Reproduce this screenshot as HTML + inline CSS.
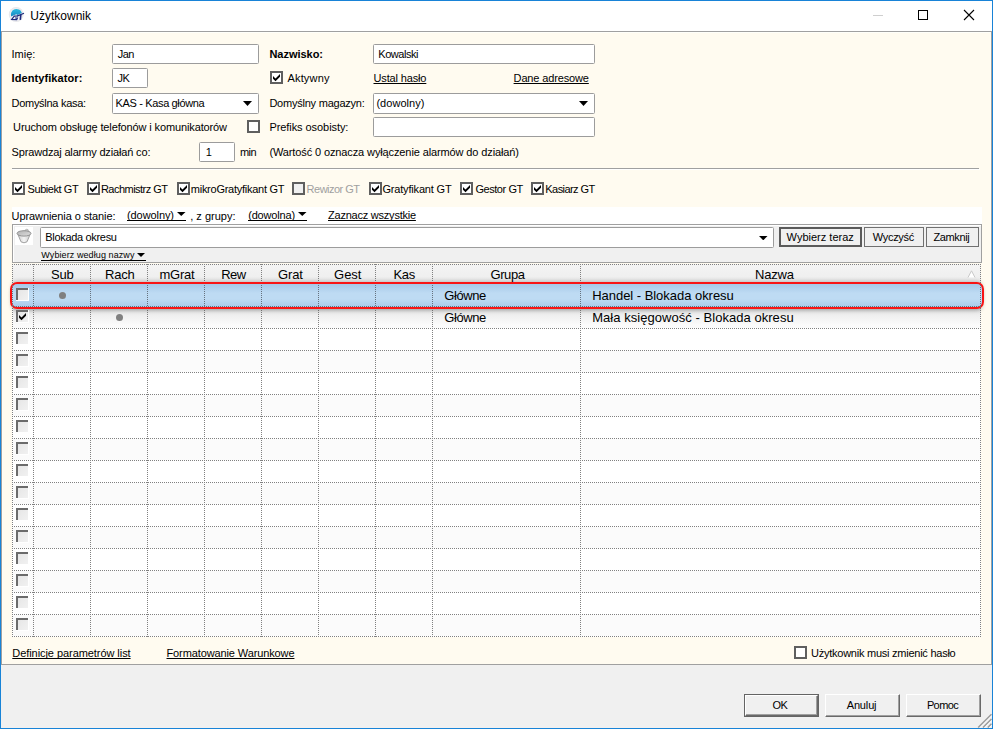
<!DOCTYPE html>
<html lang="pl"><head><meta charset="utf-8"><title>Użytkownik</title>
<style>
html,body{margin:0;padding:0}
body{width:993px;height:729px;position:relative;overflow:hidden;background:#f0f0f0;font-family:"Liberation Sans", sans-serif;}
div,.a,.t{position:absolute}
.t{white-space:nowrap;display:block;text-decoration-skip-ink:none}
</style></head>
<body>
<div style="left:0px;top:0px;width:993px;height:729px;background:#1883d7"></div>
<div style="left:1px;top:1px;width:991px;height:30px;background:#fff"></div>
<div style="left:1px;top:31px;width:991px;height:697px;background:#f0f0f0"></div>
<div style="left:1px;top:31px;width:991px;height:634px;background:#fffbf0;border:1px solid #a0a0a0;box-sizing:border-box"></div>
<div style="left:990px;top:32px;width:1px;height:632px;background:#fffff6"></div>
<div style="left:2px;top:32px;width:1px;height:632px;background:#fffdf6"></div>
<div style="left:2px;top:32px;width:988px;height:1px;background:#fffffa"></div>
<svg class="a" style="left:8px;top:6px" width="18" height="18" viewBox="0 0 18 18">
<defs><linearGradient id="ig" x1="0" y1="0" x2="0" y2="1"><stop offset="0" stop-color="#2dbbe0"/><stop offset="1" stop-color="#1787c2"/></linearGradient>
<radialGradient id="ic"><stop offset="0.7" stop-color="#f4f4f6"/><stop offset="1" stop-color="#dedee4" stop-opacity="0.8"/></radialGradient></defs>
<circle cx="8.2" cy="8.5" r="7.4" fill="url(#ic)"/>
<path d="M3.1 10.6 A5.5 5.5 0 0 1 13.9 6.9 L9.6 8.9 L8.2 8.3 Z" fill="url(#ig)"/>
<path d="M9.6 10 L6.3 10.2 L3.7 13.4 L8.7 13.6 L9.4 12 L7 12" stroke="#1c2a7c" stroke-width="1.2" fill="none"/>
<path d="M9 10.1 L16 7.3" stroke="#1c2a7c" stroke-width="1.2" fill="none"/>
<path d="M12.8 8.8 L12.3 13.9" stroke="#1c2a7c" stroke-width="1.6" fill="none"/>
</svg>
<div style="left:873px;top:15px;width:10px;height:1px;background:#cfcfcf"></div>
<div style="left:918px;top:10px;width:10px;height:10px;border:1px solid #000;box-sizing:border-box"></div>
<svg class="a" style="left:963px;top:9px" width="12" height="12" viewBox="0 0 12 12"><path d="M1 1 L11 11 M11 1 L1 11" stroke="#000" stroke-width="1.1" fill="none"/></svg>
<div style="left:112px;top:44px;width:147px;height:20px;background:#fff;border:1px solid #9c9c9c;border-radius:1.5px;box-sizing:border-box"></div>
<div style="left:112px;top:68px;width:36px;height:20px;background:#fff;border:1px solid #9c9c9c;border-radius:1.5px;box-sizing:border-box"></div>
<div style="left:112px;top:93px;width:147px;height:21px;background:#fff;border:1px solid #9c9c9c;border-radius:1.5px;box-sizing:border-box"></div>
<svg class="a" style="left:243px;top:101px" width="9" height="5" viewBox="0 0 9 5"><path d="M0 0 H9 L4.5 5 Z" fill="#000"/></svg>
<div style="left:247px;top:120px;width:13px;height:13px;background:#fff;border:2px solid #5f5f5f;box-sizing:border-box"></div>
<div style="left:199px;top:142px;width:36px;height:20px;background:#fff;border:1px solid #9c9c9c;border-radius:1.5px;box-sizing:border-box"></div>
<div style="left:373px;top:44px;width:222px;height:20px;background:#fff;border:1px solid #9c9c9c;border-radius:1.5px;box-sizing:border-box"></div>
<div style="left:270px;top:71px;width:13px;height:13px;background:#fff;border:2px solid #5f5f5f;box-sizing:border-box"><svg width="9" height="9" viewBox="0 0 9 9" style="position:absolute;left:0;top:0"><path d="M1 3 L1 5.8 L3.5 8.2 L8 3.8 L8 1 L3.5 5.4 Z" fill="#000"/></svg></div>
<div style="left:373px;top:93px;width:222px;height:21px;background:#fff;border:1px solid #9c9c9c;border-radius:1.5px;box-sizing:border-box"></div>
<svg class="a" style="left:579px;top:101px" width="9" height="5" viewBox="0 0 9 5"><path d="M0 0 H9 L4.5 5 Z" fill="#000"/></svg>
<div style="left:373px;top:117px;width:222px;height:20px;background:#fff;border:1px solid #9c9c9c;border-radius:1.5px;box-sizing:border-box"></div>
<div style="left:12px;top:168px;width:967px;height:1px;background:#a0a0a0"></div>
<div style="left:12px;top:169px;width:968px;height:1px;background:#fff"></div>
<div style="left:12px;top:182px;width:13px;height:13px;background:#fff;border:2px solid #5f5f5f;box-sizing:border-box"><svg width="9" height="9" viewBox="0 0 9 9" style="position:absolute;left:0;top:0"><path d="M1 3 L1 5.8 L3.5 8.2 L8 3.8 L8 1 L3.5 5.4 Z" fill="#000"/></svg></div>
<div style="left:87px;top:182px;width:13px;height:13px;background:#fff;border:2px solid #5f5f5f;box-sizing:border-box"><svg width="9" height="9" viewBox="0 0 9 9" style="position:absolute;left:0;top:0"><path d="M1 3 L1 5.8 L3.5 8.2 L8 3.8 L8 1 L3.5 5.4 Z" fill="#000"/></svg></div>
<div style="left:177px;top:182px;width:13px;height:13px;background:#fff;border:2px solid #5f5f5f;box-sizing:border-box"><svg width="9" height="9" viewBox="0 0 9 9" style="position:absolute;left:0;top:0"><path d="M1 3 L1 5.8 L3.5 8.2 L8 3.8 L8 1 L3.5 5.4 Z" fill="#000"/></svg></div>
<div style="left:292px;top:182px;width:13px;height:13px;background:#f0f0f0;border:2px solid #5f5f5f;box-sizing:border-box"></div>
<div style="left:369px;top:182px;width:13px;height:13px;background:#fff;border:2px solid #5f5f5f;box-sizing:border-box"><svg width="9" height="9" viewBox="0 0 9 9" style="position:absolute;left:0;top:0"><path d="M1 3 L1 5.8 L3.5 8.2 L8 3.8 L8 1 L3.5 5.4 Z" fill="#000"/></svg></div>
<div style="left:460px;top:182px;width:13px;height:13px;background:#fff;border:2px solid #5f5f5f;box-sizing:border-box"><svg width="9" height="9" viewBox="0 0 9 9" style="position:absolute;left:0;top:0"><path d="M1 3 L1 5.8 L3.5 8.2 L8 3.8 L8 1 L3.5 5.4 Z" fill="#000"/></svg></div>
<div style="left:531px;top:182px;width:13px;height:13px;background:#fff;border:2px solid #5f5f5f;box-sizing:border-box"><svg width="9" height="9" viewBox="0 0 9 9" style="position:absolute;left:0;top:0"><path d="M1 3 L1 5.8 L3.5 8.2 L8 3.8 L8 1 L3.5 5.4 Z" fill="#000"/></svg></div>
<div style="left:12px;top:207px;width:970px;height:18px;background:#fff"></div>
<svg class="a" style="left:177px;top:212px" width="8.5" height="4" viewBox="0 0 8.5 4"><path d="M0 0 H8.5 L4.25 4 Z" fill="#000"/></svg>
<div style="left:127px;top:220px;width:59px;height:1px;background:#000"></div>
<svg class="a" style="left:298px;top:212px" width="8.5" height="4" viewBox="0 0 8.5 4"><path d="M0 0 H8.5 L4.25 4 Z" fill="#000"/></svg>
<div style="left:248px;top:220px;width:59px;height:1px;background:#000"></div>
<div style="left:12px;top:224px;width:970px;height:39px;background:#f0f0f0;border:1px solid #a0a0a0;box-sizing:border-box"></div>
<div style="left:13px;top:225px;width:968px;height:1px;background:#fff"></div>
<div style="left:13px;top:225px;width:1px;height:37px;background:#fff"></div>
<div style="left:15px;top:227px;width:18px;height:18px;background:#fff"></div>
<svg class="a" style="left:15px;top:227px" width="18" height="18" viewBox="0 0 18 18">
<defs><linearGradient id="fg" x1="0" y1="0" x2="1" y2="0"><stop offset="0" stop-color="#cfcfcf"/><stop offset="0.5" stop-color="#f4f4f4"/><stop offset="1" stop-color="#cdcdcd"/></linearGradient>
<linearGradient id="fe" x1="0" y1="0" x2="1" y2="1"><stop offset="0" stop-color="#b2b2b2"/><stop offset="1" stop-color="#dedede"/></linearGradient></defs>
<path d="M3 7.6 L6 14.8 Q9 16.8 12 14.8 L15 7.6 Z" fill="url(#fg)" stroke="#a2a2a2" stroke-width="1"/>
<circle cx="11.8" cy="3.9" r="1.7" fill="#cacaca" stroke="#a8a8a8" stroke-width="0.7"/>
<ellipse cx="9" cy="6.4" rx="7" ry="2.7" fill="url(#fe)" stroke="#939393" stroke-width="1"/>
</svg>
<div style="left:40px;top:227px;width:734px;height:21px;background:#fff;border:1px solid #9c9c9c;border-radius:1.5px;box-sizing:border-box"></div>
<svg class="a" style="left:759px;top:236px" width="8.5" height="4.3" viewBox="0 0 8.5 4.3"><path d="M0 0 H8.5 L4.25 4.3 Z" fill="#000"/></svg>
<svg class="a" style="left:137px;top:253px" width="8" height="4" viewBox="0 0 8 4"><path d="M0 0 H8 L4.0 4 Z" fill="#000"/></svg>
<div style="left:41px;top:260px;width:105px;height:1px;background:#000"></div>
<div style="left:779px;top:227px;width:83px;height:20px;background:#f0f0f0;border:2px solid #5a5a5a;box-sizing:border-box"></div>
<div style="left:864px;top:227px;width:60px;height:20px;background:#f0f0f0;border:1px solid #707070;box-sizing:border-box"></div>
<div style="left:926px;top:227px;width:53px;height:20px;background:#f0f0f0;border:1px solid #707070;box-sizing:border-box"></div>
<div style="left:12px;top:264px;width:969px;height:373px;background:#fff"></div>
<div style="left:12px;top:264px;width:969px;height:21px;background:linear-gradient(#f4f4f4,#ececec)"></div>
<div style="left:13px;top:307px;width:968px;height:21px;background:linear-gradient(#d6d6d6,#ececec 30%,#fbfbfb 85%)"></div>
<div style="left:13px;top:351px;width:968px;height:21px;background:#fbfbfb"></div>
<div style="left:13px;top:395px;width:968px;height:21px;background:#fbfbfb"></div>
<div style="left:13px;top:439px;width:968px;height:21px;background:#fbfbfb"></div>
<div style="left:13px;top:483px;width:968px;height:21px;background:#fbfbfb"></div>
<div style="left:13px;top:527px;width:968px;height:21px;background:#fbfbfb"></div>
<div style="left:13px;top:571px;width:968px;height:21px;background:#fbfbfb"></div>
<div style="left:13px;top:615px;width:968px;height:21px;background:#fbfbfb"></div>
<svg class="a" style="left:0;top:0" width="993" height="729" viewBox="0 0 993 729"><g stroke="#808080" stroke-width="1" stroke-dasharray="1 1" shape-rendering="crispEdges"><line x1="12.5" y1="264" x2="12.5" y2="637"/><line x1="33.5" y1="264" x2="33.5" y2="637"/><line x1="90.5" y1="264" x2="90.5" y2="637"/><line x1="147.5" y1="264" x2="147.5" y2="637"/><line x1="204.5" y1="264" x2="204.5" y2="637"/><line x1="261.5" y1="264" x2="261.5" y2="637"/><line x1="318.5" y1="264" x2="318.5" y2="637"/><line x1="375.5" y1="264" x2="375.5" y2="637"/><line x1="432.5" y1="264" x2="432.5" y2="637"/><line x1="580.5" y1="264" x2="580.5" y2="637"/><line x1="980.5" y1="264" x2="980.5" y2="637"/><line x1="12" y1="264.5" x2="981" y2="264.5"/><line x1="12" y1="284.5" x2="981" y2="284.5"/><line x1="12" y1="306.5" x2="981" y2="306.5"/><line x1="12" y1="328.5" x2="981" y2="328.5"/><line x1="12" y1="350.5" x2="981" y2="350.5"/><line x1="12" y1="372.5" x2="981" y2="372.5"/><line x1="12" y1="394.5" x2="981" y2="394.5"/><line x1="12" y1="416.5" x2="981" y2="416.5"/><line x1="12" y1="438.5" x2="981" y2="438.5"/><line x1="12" y1="460.5" x2="981" y2="460.5"/><line x1="12" y1="482.5" x2="981" y2="482.5"/><line x1="12" y1="504.5" x2="981" y2="504.5"/><line x1="12" y1="526.5" x2="981" y2="526.5"/><line x1="12" y1="548.5" x2="981" y2="548.5"/><line x1="12" y1="570.5" x2="981" y2="570.5"/><line x1="12" y1="592.5" x2="981" y2="592.5"/><line x1="12" y1="614.5" x2="981" y2="614.5"/><line x1="12" y1="636.5" x2="981" y2="636.5"/></g></svg>
<svg class="a" style="left:967px;top:270px" width="9" height="8" viewBox="0 0 9 8"><path d="M1 7.5 L4.5 0.8 L8 7.5" fill="#fff" stroke="#c8c8c8" stroke-width="1"/></svg>
<div style="left:9.5px;top:282.2px;width:974px;height:27.3px;border:2.4px solid #f81414;border-radius:7px;box-sizing:border-box;background:linear-gradient(#a6c8e7,#bedbf3 40%,#bedbf3 65%,#a8caea);box-shadow:0 3px 4px -2px rgba(0,0,0,0.3),0 -3px 4px -2px rgba(0,0,0,0.22)"></div>
<svg class="a" style="left:0;top:0" width="993" height="729" viewBox="0 0 993 729"><g stroke="#66727e" stroke-width="1" stroke-dasharray="1 1" shape-rendering="crispEdges"><line x1="33.5" y1="285" x2="33.5" y2="307"/><line x1="90.5" y1="285" x2="90.5" y2="307"/><line x1="147.5" y1="285" x2="147.5" y2="307"/><line x1="204.5" y1="285" x2="204.5" y2="307"/><line x1="261.5" y1="285" x2="261.5" y2="307"/><line x1="318.5" y1="285" x2="318.5" y2="307"/><line x1="375.5" y1="285" x2="375.5" y2="307"/><line x1="432.5" y1="285" x2="432.5" y2="307"/><line x1="580.5" y1="285" x2="580.5" y2="307"/><line x1="12" y1="306.5" x2="981" y2="306.5"/><line x1="12.5" y1="285" x2="12.5" y2="307"/><line x1="980.5" y1="285" x2="980.5" y2="307"/></g></svg>
<div style="left:16px;top:288px;width:13px;height:13px;background:#fff"><div style="left:0;top:0;width:12px;height:12px;background:#6b6b6b"></div><div style="left:2px;top:2px;width:10px;height:10px;background:linear-gradient(135deg,#e6e6e6,#f1f1f1)"></div></div>
<div style="left:16px;top:310px;width:13px;height:13px;background:#fff"><div style="left:0;top:0;width:12px;height:12px;background:#6b6b6b"></div><div style="left:2px;top:2px;width:10px;height:10px;background:linear-gradient(135deg,#e6e6e6,#f1f1f1)"></div><svg width="9" height="9" viewBox="0 0 9 9" style="position:absolute;left:2px;top:2px"><path d="M1 3 L1 5.8 L3.5 8.2 L8 3.8 L8 1 L3.5 5.4 Z" fill="#000"/></svg></div>
<div style="left:16px;top:332px;width:13px;height:13px;background:#fff"><div style="left:0;top:0;width:12px;height:12px;background:#6b6b6b"></div><div style="left:2px;top:2px;width:10px;height:10px;background:linear-gradient(135deg,#e6e6e6,#f1f1f1)"></div></div>
<div style="left:16px;top:354px;width:13px;height:13px;background:#fff"><div style="left:0;top:0;width:12px;height:12px;background:#6b6b6b"></div><div style="left:2px;top:2px;width:10px;height:10px;background:linear-gradient(135deg,#e6e6e6,#f1f1f1)"></div></div>
<div style="left:16px;top:376px;width:13px;height:13px;background:#fff"><div style="left:0;top:0;width:12px;height:12px;background:#6b6b6b"></div><div style="left:2px;top:2px;width:10px;height:10px;background:linear-gradient(135deg,#e6e6e6,#f1f1f1)"></div></div>
<div style="left:16px;top:398px;width:13px;height:13px;background:#fff"><div style="left:0;top:0;width:12px;height:12px;background:#6b6b6b"></div><div style="left:2px;top:2px;width:10px;height:10px;background:linear-gradient(135deg,#e6e6e6,#f1f1f1)"></div></div>
<div style="left:16px;top:420px;width:13px;height:13px;background:#fff"><div style="left:0;top:0;width:12px;height:12px;background:#6b6b6b"></div><div style="left:2px;top:2px;width:10px;height:10px;background:linear-gradient(135deg,#e6e6e6,#f1f1f1)"></div></div>
<div style="left:16px;top:442px;width:13px;height:13px;background:#fff"><div style="left:0;top:0;width:12px;height:12px;background:#6b6b6b"></div><div style="left:2px;top:2px;width:10px;height:10px;background:linear-gradient(135deg,#e6e6e6,#f1f1f1)"></div></div>
<div style="left:16px;top:464px;width:13px;height:13px;background:#fff"><div style="left:0;top:0;width:12px;height:12px;background:#6b6b6b"></div><div style="left:2px;top:2px;width:10px;height:10px;background:linear-gradient(135deg,#e6e6e6,#f1f1f1)"></div></div>
<div style="left:16px;top:486px;width:13px;height:13px;background:#fff"><div style="left:0;top:0;width:12px;height:12px;background:#6b6b6b"></div><div style="left:2px;top:2px;width:10px;height:10px;background:linear-gradient(135deg,#e6e6e6,#f1f1f1)"></div></div>
<div style="left:16px;top:508px;width:13px;height:13px;background:#fff"><div style="left:0;top:0;width:12px;height:12px;background:#6b6b6b"></div><div style="left:2px;top:2px;width:10px;height:10px;background:linear-gradient(135deg,#e6e6e6,#f1f1f1)"></div></div>
<div style="left:16px;top:530px;width:13px;height:13px;background:#fff"><div style="left:0;top:0;width:12px;height:12px;background:#6b6b6b"></div><div style="left:2px;top:2px;width:10px;height:10px;background:linear-gradient(135deg,#e6e6e6,#f1f1f1)"></div></div>
<div style="left:16px;top:552px;width:13px;height:13px;background:#fff"><div style="left:0;top:0;width:12px;height:12px;background:#6b6b6b"></div><div style="left:2px;top:2px;width:10px;height:10px;background:linear-gradient(135deg,#e6e6e6,#f1f1f1)"></div></div>
<div style="left:16px;top:574px;width:13px;height:13px;background:#fff"><div style="left:0;top:0;width:12px;height:12px;background:#6b6b6b"></div><div style="left:2px;top:2px;width:10px;height:10px;background:linear-gradient(135deg,#e6e6e6,#f1f1f1)"></div></div>
<div style="left:16px;top:596px;width:13px;height:13px;background:#fff"><div style="left:0;top:0;width:12px;height:12px;background:#6b6b6b"></div><div style="left:2px;top:2px;width:10px;height:10px;background:linear-gradient(135deg,#e6e6e6,#f1f1f1)"></div></div>
<div style="left:16px;top:618px;width:13px;height:13px;background:#fff"><div style="left:0;top:0;width:12px;height:12px;background:#6b6b6b"></div><div style="left:2px;top:2px;width:10px;height:10px;background:linear-gradient(135deg,#e6e6e6,#f1f1f1)"></div></div>
<div style="left:59px;top:292px;width:7px;height:7px;background:#808080;border-radius:50%"></div>
<div style="left:116px;top:314px;width:7px;height:7px;background:#808080;border-radius:50%"></div>
<div style="left:794px;top:646px;width:13px;height:13px;background:#fff;border:2px solid #5f5f5f;box-sizing:border-box"></div>
<div style="left:744px;top:694px;width:75px;height:23px;background:#f0f0f0;border:1px solid #646464;box-sizing:border-box"></div>
<div style="left:745px;top:695px;width:73px;height:21px;box-sizing:border-box;border-top:1px solid #fff;border-left:1px solid #fff;border-right:1px solid #696969;border-bottom:1px solid #696969"></div>
<div style="left:746px;top:696px;width:71px;height:19px;box-sizing:border-box;border-right:1px solid #a0a0a0;border-bottom:1px solid #a0a0a0"></div>
<div style="left:825px;top:694px;width:75px;height:23px;background:#f0f0f0;box-sizing:border-box;border-top:1px solid #fff;border-left:1px solid #fff;border-right:1px solid #696969;border-bottom:1px solid #696969"></div>
<div style="left:826px;top:695px;width:73px;height:21px;box-sizing:border-box;border-right:1px solid #a0a0a0;border-bottom:1px solid #a0a0a0"></div>
<div style="left:906px;top:694px;width:75px;height:23px;background:#f0f0f0;box-sizing:border-box;border-top:1px solid #fff;border-left:1px solid #fff;border-right:1px solid #696969;border-bottom:1px solid #696969"></div>
<div style="left:907px;top:695px;width:73px;height:21px;box-sizing:border-box;border-right:1px solid #a0a0a0;border-bottom:1px solid #a0a0a0"></div>
<svg class="a" style="left:976px;top:712px" width="16" height="16" viewBox="0 0 16 16"><g stroke="#fff" stroke-width="1.3"><path d="M15.5 3.5 L3.5 15.5 M15.5 8.3 L8.3 15.5 M15.5 13 L13 15.5"/></g><g stroke="#9c9c9c" stroke-width="1.5"><path d="M15.5 2.2 L2.2 15.5 M15.5 7 L7 15.5 M15.5 11.8 L11.8 15.5"/></g></svg>
<span class="t" style="left:30.3px;top:9px;font-size:12px;line-height:14px;height:14px;color:#000;">Użytkownik</span>
<span class="t" style="left:117.7px;top:48px;font-size:11px;line-height:12px;height:12px;color:#000;letter-spacing:-0.500px;">Jan</span>
<span class="t" style="left:117.53px;top:72px;font-size:11px;line-height:12px;height:12px;color:#000;letter-spacing:-0.600px;">JK</span>
<span class="t" style="left:115.6px;top:97px;font-size:11px;line-height:12px;height:12px;color:#000;letter-spacing:-0.356px;">KAS - Kasa główna</span>
<span class="t" style="left:205.7px;top:145.5px;font-size:11px;line-height:12px;height:12px;color:#000;">1</span>
<span class="t" style="left:11.5px;top:48px;font-size:11px;line-height:12px;height:12px;color:#000;letter-spacing:-0.010px;">Imię:</span>
<span class="t" style="left:11.5px;top:72px;font-size:11px;line-height:12px;height:12px;color:#000;font-weight:bold;letter-spacing:0.090px;">Identyfikator:</span>
<span class="t" style="left:11.5px;top:97px;font-size:11px;line-height:12px;height:12px;color:#000;letter-spacing:-0.279px;">Domyślna kasa:</span>
<span class="t" style="left:13.1px;top:121px;font-size:11px;line-height:12px;height:12px;color:#000;letter-spacing:-0.123px;">Uruchom obsługę telefonów i komunikatorów</span>
<span class="t" style="left:11.5px;top:145.5px;font-size:11px;line-height:12px;height:12px;color:#000;letter-spacing:-0.152px;">Sprawdzaj alarmy działań co:</span>
<span class="t" style="left:240.03px;top:145.5px;font-size:11px;line-height:12px;height:12px;color:#000;letter-spacing:-0.600px;">min</span>
<span class="t" style="left:378.3px;top:48px;font-size:11px;line-height:12px;height:12px;color:#000;letter-spacing:-0.468px;">Kowalski</span>
<span class="t" style="left:287.5px;top:72px;font-size:11px;line-height:12px;height:12px;color:#000;letter-spacing:0.159px;">Aktywny</span>
<span class="t" style="left:373.5px;top:72px;font-size:11px;line-height:12px;height:12px;color:#000;text-decoration:underline;letter-spacing:-0.145px;">Ustal hasło</span>
<span class="t" style="left:513.6px;top:72px;font-size:11px;line-height:12px;height:12px;color:#000;text-decoration:underline;letter-spacing:-0.141px;">Dane adresowe</span>
<span class="t" style="left:376.4px;top:97px;font-size:11px;line-height:12px;height:12px;color:#000;letter-spacing:0.049px;">(dowolny)</span>
<span class="t" style="left:269.4px;top:48px;font-size:11px;line-height:12px;height:12px;color:#000;font-weight:bold;letter-spacing:-0.023px;">Nazwisko:</span>
<span class="t" style="left:269.4px;top:97px;font-size:11px;line-height:12px;height:12px;color:#000;letter-spacing:-0.227px;">Domyślny magazyn:</span>
<span class="t" style="left:269.4px;top:121px;font-size:11px;line-height:12px;height:12px;color:#000;letter-spacing:-0.066px;">Prefiks osobisty:</span>
<span class="t" style="left:269.4px;top:145.5px;font-size:11px;line-height:12px;height:12px;color:#000;letter-spacing:-0.115px;">(Wartość 0 oznacza wyłączenie alarmów do działań)</span>
<span class="t" style="left:27.6px;top:183px;font-size:11px;line-height:12px;height:12px;color:#000;letter-spacing:-0.435px;">Subiekt GT</span>
<span class="t" style="left:100.9px;top:183px;font-size:11px;line-height:12px;height:12px;color:#000;letter-spacing:-0.515px;">Rachmistrz GT</span>
<span class="t" style="left:190.8px;top:183px;font-size:11px;line-height:12px;height:12px;color:#000;letter-spacing:-0.260px;">mikroGratyfikant GT</span>
<span class="t" style="left:306.6px;top:183px;font-size:11px;line-height:12px;height:12px;color:#a0a0a0;letter-spacing:-0.512px;">Rewizor GT</span>
<span class="t" style="left:382.4px;top:183px;font-size:11px;line-height:12px;height:12px;color:#000;letter-spacing:-0.173px;">Gratyfikant GT</span>
<span class="t" style="left:475.4px;top:183px;font-size:11px;line-height:12px;height:12px;color:#000;letter-spacing:-0.440px;">Gestor GT</span>
<span class="t" style="left:545.3px;top:183px;font-size:11px;line-height:12px;height:12px;color:#000;letter-spacing:-0.560px;">Kasiarz GT</span>
<span class="t" style="left:11.6px;top:210px;font-size:11px;line-height:12px;height:12px;color:#000;letter-spacing:-0.093px;">Uprawnienia o stanie:</span>
<span class="t" style="left:127px;top:209px;font-size:11px;line-height:12px;height:12px;color:#000;letter-spacing:-0.081px;">(dowolny)</span>
<span class="t" style="left:190.2px;top:210px;font-size:11px;line-height:12px;height:12px;color:#000;letter-spacing:0.005px;">, z grupy:</span>
<span class="t" style="left:248.2px;top:209px;font-size:11px;line-height:12px;height:12px;color:#000;letter-spacing:-0.178px;">(dowolna)</span>
<span class="t" style="left:328px;top:209px;font-size:11px;line-height:12px;height:12px;color:#000;text-decoration:underline;letter-spacing:-0.224px;">Zaznacz wszystkie</span>
<span class="t" style="left:45.3px;top:231px;font-size:11px;line-height:12px;height:12px;color:#000;letter-spacing:-0.321px;">Blokada okresu</span>
<span class="t" style="left:41.3px;top:250px;font-size:9px;line-height:10px;height:10px;color:#000;letter-spacing:0.089px;">Wybierz według nazwy</span>
<span class="t" style="left:786.6px;top:231px;font-size:11px;line-height:12px;height:12px;color:#000;letter-spacing:0.005px;">Wybierz teraz</span>
<span class="t" style="left:872.7px;top:231px;font-size:11px;line-height:12px;height:12px;color:#000;letter-spacing:-0.276px;">Wyczyść</span>
<span class="t" style="left:933.4px;top:231px;font-size:11px;line-height:12px;height:12px;color:#000;letter-spacing:-0.356px;">Zamknij</span>
<span class="t" style="left:51.1px;top:267px;font-size:13px;line-height:15px;height:15px;color:#000;letter-spacing:-0.216px;">Sub</span>
<span class="t" style="left:105.1px;top:267px;font-size:13px;line-height:15px;height:15px;color:#000;letter-spacing:-0.217px;">Rach</span>
<span class="t" style="left:159.5px;top:267px;font-size:13px;line-height:15px;height:15px;color:#000;letter-spacing:-0.228px;">mGrat</span>
<span class="t" style="left:221.3px;top:267px;font-size:13px;line-height:15px;height:15px;color:#000;letter-spacing:-0.566px;">Rew</span>
<span class="t" style="left:278.1px;top:267px;font-size:13px;line-height:15px;height:15px;color:#000;letter-spacing:-0.199px;">Grat</span>
<span class="t" style="left:334.1px;top:267px;font-size:13px;line-height:15px;height:15px;color:#000;letter-spacing:-0.048px;">Gest</span>
<span class="t" style="left:393.4px;top:267px;font-size:13px;line-height:15px;height:15px;color:#000;letter-spacing:-0.282px;">Kas</span>
<span class="t" style="left:490.5px;top:267px;font-size:13px;line-height:15px;height:15px;color:#000;letter-spacing:-0.431px;">Grupa</span>
<span class="t" style="left:755px;top:267px;font-size:13px;line-height:15px;height:15px;color:#000;letter-spacing:-0.189px;">Nazwa</span>
<span class="t" style="left:444.3px;top:288px;font-size:13px;line-height:15px;height:15px;color:#000;letter-spacing:-0.414px;">Główne</span>
<span class="t" style="left:444.3px;top:310px;font-size:13px;line-height:15px;height:15px;color:#000;letter-spacing:-0.414px;">Główne</span>
<span class="t" style="left:592.2px;top:288px;font-size:13px;line-height:15px;height:15px;color:#000;letter-spacing:-0.034px;">Handel - Blokada okresu</span>
<span class="t" style="left:592.2px;top:310px;font-size:13px;line-height:15px;height:15px;color:#000;letter-spacing:0.043px;">Mała księgowość - Blokada okresu</span>
<span class="t" style="left:12.3px;top:647px;font-size:11px;line-height:12px;height:12px;color:#000;text-decoration:underline;letter-spacing:-0.062px;">Definicje parametrów list</span>
<span class="t" style="left:166.5px;top:647px;font-size:11px;line-height:12px;height:12px;color:#000;text-decoration:underline;letter-spacing:-0.113px;">Formatowanie Warunkowe</span>
<span class="t" style="left:811px;top:647px;font-size:11px;line-height:12px;height:12px;color:#000;letter-spacing:-0.246px;">Użytkownik musi zmienić hasło</span>
<span class="t" style="left:772.6px;top:699px;font-size:11px;line-height:12px;height:12px;color:#000;letter-spacing:-0.600px;">OK</span>
<span class="t" style="left:846.7px;top:699px;font-size:11px;line-height:12px;height:12px;color:#000;letter-spacing:-0.141px;">Anuluj</span>
<span class="t" style="left:926.88px;top:699px;font-size:11px;line-height:12px;height:12px;color:#000;letter-spacing:-0.600px;">Pomoc</span>
</body></html>
